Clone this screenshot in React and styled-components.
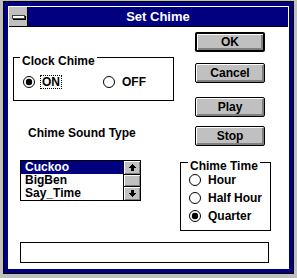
import React from 'react';
import styled, { createGlobalStyle } from 'styled-components';

const Global = createGlobalStyle`
  html, body { margin: 0; padding: 0; background: #c0c0c0; }
  body { font-family: "Liberation Sans", Arial, sans-serif; }
  * { box-sizing: border-box; }
`;

const Window = styled.div`
  margin: 1px 0 0 3px;
  width: 291px;
  height: 273px;
  border: 1px solid #000;
  background: #000080;
  padding: 4px;
`;

const Frame = styled.div`
  height: 100%;
  border: 1px solid #fff;
  background: #fff;
  display: flex;
  flex-direction: column;
`;

const TitleBar = styled.div`
  flex: none;
  height: 20px;
  display: flex;
  background: #000080;
  border-bottom: 1px solid #000;
`;

const SysMenu = styled.div`
  width: 19px;
  background: #c0c0c0;
  border-right: 1px solid #000;
  display: flex;
  align-items: center;
  justify-content: center;
`;

const SysBar = styled.div`
  width: 13px;
  height: 4px;
  background: #fff;
  border: 1px solid #404040;
  box-shadow: 1px 1px 0 #000;
`;

const Title = styled.div`
  flex: 1;
  color: #fff;
  font-weight: bold;
  font-size: 13px;
  line-height: 19px;
  text-align: center;
`;

const Client = styled.div`
  flex: 1;
  display: flex;
  flex-direction: column;
`;

const Top = styled.div`
  display: flex;
  align-items: flex-start;
`;

const LeftCol = styled.div`
  width: 171px;
  display: flex;
  flex-direction: column;
  align-items: flex-start;
`;

const RightCol = styled.div`
  flex: 1;
  display: flex;
  flex-direction: column;
  align-items: flex-start;
`;

const Group = styled.div`
  position: relative;
  border: 1px solid #000;
  width: ${p => p.$w}px;
  height: ${p => p.$h}px;
  margin: ${p => p.$m};
  padding: ${p => p.$pad};
  display: flex;
  flex-direction: ${p => p.$dir || 'row'};
  gap: ${p => p.$gap || 0}px;
`;

const GroupLabel = styled.span`
  position: absolute;
  left: ${p => p.$left}px;
  top: -3px;
  background: #fff;
  padding: 0 2px;
  font-weight: bold;
  font-size: 12px;
  line-height: 12px;
  color: #000;
  white-space: nowrap;
`;

const RadioItem = styled.div`
  display: flex;
  align-items: center;
  height: 14px;
  width: ${p => (p.$w ? `${p.$w}px` : 'auto')};
`;

const RadioText = styled.span`
  margin-left: 5px;
  padding: 0 1px;
  border: 1px ${p => (p.$focus ? 'dotted #000' : 'solid transparent')};
  font-weight: bold;
  font-size: 12px;
  line-height: 12px;
  color: #000;
  white-space: nowrap;
`;

const Circle = styled.svg`
  flex: none;
  display: block;
`;

function Radio({ checked, label, focus, w }) {
  return (
    <RadioItem $w={w}>
      <Circle width="12" height="12" viewBox="0 0 12 12">
        <circle cx="6" cy="6" r="5.5" fill="#fff" stroke="#000" strokeWidth="1" />
        {checked && <circle cx="6" cy="6" r="3.2" fill="#000" />}
      </Circle>
      <RadioText $focus={focus}>{label}</RadioText>
    </RadioItem>
  );
}

const Label = styled.div`
  margin: ${p => p.$m};
  font-weight: bold;
  font-size: 12px;
  line-height: 14px;
  color: #000;
  white-space: nowrap;
`;

const ListBox = styled.div`
  margin: 20px 0 0 11px;
  width: 121px;
  height: 41px;
  border: 1px solid #000;
  display: flex;
  overflow: hidden;
`;

const Items = styled.div`
  flex: 1;
  display: flex;
  flex-direction: column;
`;

const Item = styled.div`
  flex: none;
  height: 13px;
  line-height: 13px;
  padding-left: 4px;
  font-weight: bold;
  font-size: 12px;
  white-space: nowrap;
  background: ${p => (p.$sel ? '#000080' : '#fff')};
  color: ${p => (p.$sel ? '#fff' : '#000')};
`;

const ScrollBar = styled.div`
  width: 17px;
  border-left: 1px solid #000;
  display: flex;
  flex-direction: column;
`;

const ScrollBtn = styled.div`
  height: 13px;
  flex: none;
  background: #c0c0c0;
  box-shadow: inset 1px 1px 0 #fff, inset -1px -1px 0 #808080;
  display: flex;
  align-items: center;
  justify-content: center;
`;

const Thumb = styled.div`
  flex: 1;
  background: #c0c0c0;
  border-top: 1px solid #000;
  border-bottom: 1px solid #000;
  box-shadow: inset 1px 1px 0 #fff, inset -1px -1px 0 #808080;
`;

const Arrow = ({ down }) => (
  <svg width="7" height="7" viewBox="0 0 7 7" shapeRendering="crispEdges"
       style={down ? { transform: 'rotate(180deg)' } : undefined}>
    <polygon points="3.5,0 7,4 5,4 5,7 2,7 2,4 0,4" fill="#000" />
  </svg>
);

const Button = styled.div`
  width: 70px;
  height: 20px;
  margin: ${p => p.$mt}px 0 0 15px;
  border: ${p => (p.$default ? 2 : 1)}px solid #000;
  border-radius: 2px;
  background: #c0c0c0;
  box-shadow: inset 1px 1px 0 #fff, inset -1px -1px 0 #808080, inset -2px -2px 0 #808080;
  display: flex;
  align-items: center;
  justify-content: center;
  font-weight: bold;
  font-size: 12px;
  line-height: 12px;
  color: #000;
`;

const Status = styled.div`
  margin: 11px 0 0 11px;
  width: 249px;
  height: 21px;
  border: 1px solid #000;
  background: #fff;
`;

export default function App() {
  return (
    <>
      <Global />
      <Window>
        <Frame>
          <TitleBar>
            <SysMenu><SysBar /></SysMenu>
            <Title>Set Chime</Title>
          </TitleBar>
          <Client>
            <Top>
              <LeftCol>
                <Group $w={161} $h={44} $m="30px 0 0 4px" $pad="17px 0 0 9px">
                  <GroupLabel $left={6}>Clock Chime</GroupLabel>
                  <Radio checked focus label="ON" w={80} />
                  <Radio label="OFF" />
                </Group>
                <Label $m="25px 0 0 19px">Chime Sound Type</Label>
                <ListBox>
                  <Items>
                    <Item $sel>Cuckoo</Item>
                    <Item>BigBen</Item>
                    <Item>Say_Time</Item>
                  </Items>
                  <ScrollBar>
                    <ScrollBtn><Arrow /></ScrollBtn>
                    <Thumb />
                    <ScrollBtn><Arrow down /></ScrollBtn>
                  </ScrollBar>
                </ListBox>
              </LeftCol>
              <RightCol>
                <Button $default $mt={5}>OK</Button>
                <Button $mt={11}>Cancel</Button>
                <Button $mt={14}>Play</Button>
                <Button $mt={9}>Stop</Button>
                <Group $w={91} $h={69} $m="16px 0 0 0" $pad="10px 0 0 8px" $dir="column" $gap={4}>
                  <GroupLabel $left={7}>Chime Time</GroupLabel>
                  <Radio label="Hour" />
                  <Radio label="Half Hour" />
                  <Radio checked label="Quarter" />
                </Group>
              </RightCol>
            </Top>
            <Status />
          </Client>
        </Frame>
      </Window>
    </>
  );
}
